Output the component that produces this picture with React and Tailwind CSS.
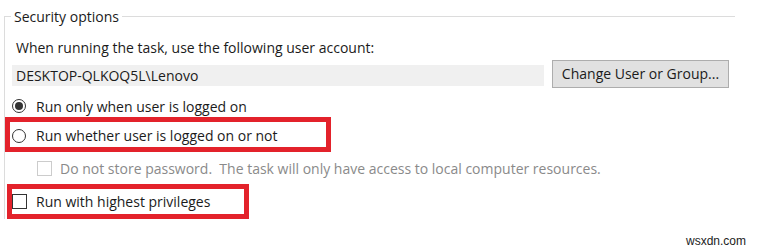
import React from 'react';

function Radio({ checked }) {
  return (
    <span className="w-[14px] h-[14px] rounded-full border border-[#333333] flex items-center justify-center shrink-0 bg-white">
      {checked && <span className="w-[8px] h-[8px] rounded-full bg-[#333333]" />}
    </span>
  );
}

function Check({ disabled }) {
  return (
    <span
      className={
        disabled
          ? 'w-[15px] h-[15px] border border-[#cccccc] bg-white shrink-0'
          : 'w-[15px] h-[15px] border border-[#333333] bg-white shrink-0'
      }
    />
  );
}

export default function App() {
  return (
    <div className="relative w-[758px] h-[251px] bg-white overflow-hidden font-['Open_Sans',sans-serif] text-[14px] text-[#1b1b1b]">
      <div className="pt-[7px] pl-[4px]">
        <fieldset className="border-l border-t border-[#dcdcdc] w-[731px] h-[212px]">
          <legend className="ml-[6px] px-[3px] leading-[19px]">Security options</legend>

          {/* account */}
          <div className="ml-[11px] mt-[12px] leading-[20px]">
            When running the task, use the following user account:
          </div>
          <div className="flex items-start gap-[8px] ml-[7px] mt-[2px]">
            <div className="w-[532px] h-[21px] mt-[5px] bg-[#f0f0f0] pl-[4px] leading-[21px]">
              DESKTOP-QLKOQ5L\Lenovo
            </div>
            <button className="w-[177px] h-[28px] bg-[#e1e1e1] border border-[#adadad] leading-[26px]">
              Change User or Group...
            </button>
          </div>

          {/* options */}
          <div className="flex items-center gap-[10px] ml-[7px] mt-[8px] h-[20px]">
            <Radio checked />
            <span>Run only when user is logged on</span>
          </div>

          <div className="mt-[1px] w-[326px] h-[35px] border-[5px] border-[#e3222b] flex items-center gap-[10px] pl-[2px] pt-[2px]">
            <Radio />
            <span>Run whether user is logged on or not</span>
          </div>

          <div className="flex items-center gap-[8px] ml-[32px] mt-[6px] h-[20px] text-[#8a8a8a]">
            <Check disabled />
            <span className="whitespace-pre">Do not store password.  The task will only have access to local computer resources.</span>
          </div>

          <div className="mt-[6px] ml-[2px] w-[242px] h-[35px] border-[5px] border-[#e3222b] flex items-center gap-[9px]">
            <Check />
            <span>Run with highest privileges</span>
          </div>
        </fieldset>
      </div>

      <div className="absolute right-[12px] bottom-[3px] font-['Liberation_Sans',sans-serif] text-[12px] leading-[14px] text-[#222222]">
        wsxdn.com
      </div>
    </div>
  );
}
